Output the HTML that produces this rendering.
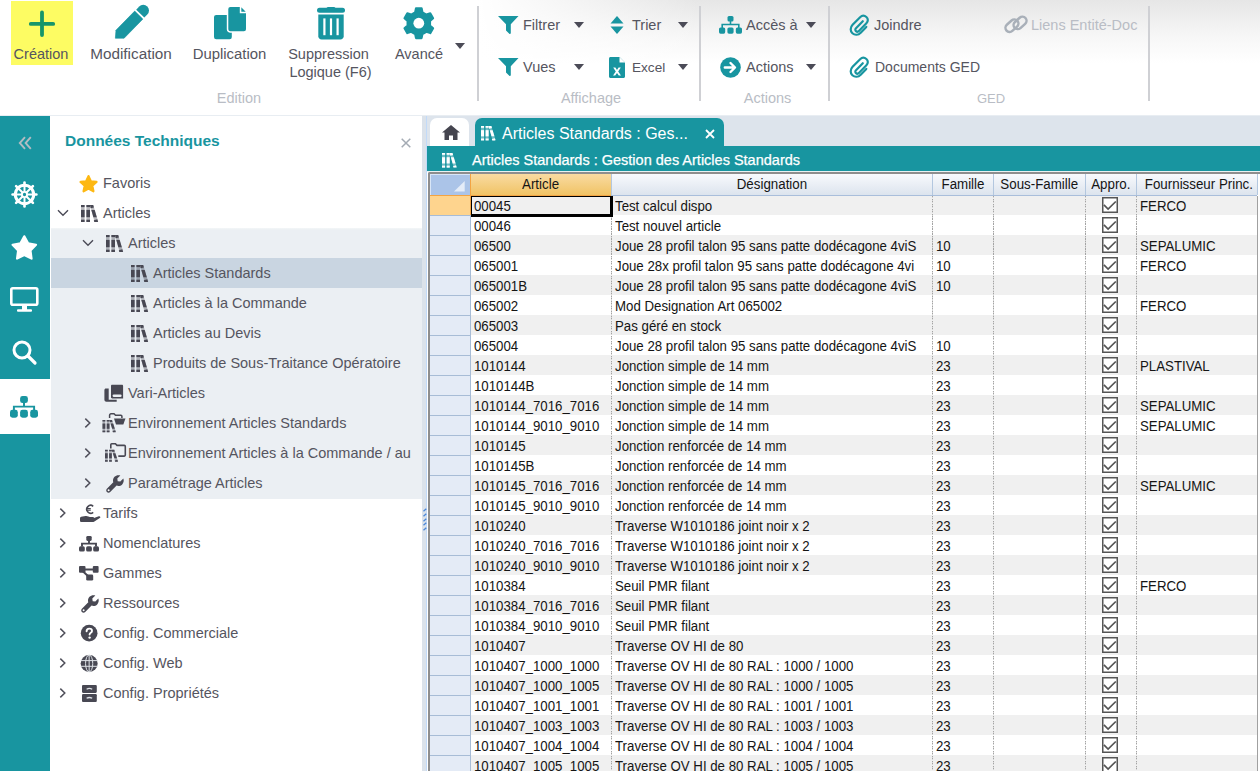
<!DOCTYPE html>
<html><head><meta charset="utf-8"><style>
*{margin:0;padding:0;box-sizing:border-box}
html,body{width:1260px;height:771px;overflow:hidden;background:#fff;font-family:"Liberation Sans",sans-serif;color:#4b4b57}
.a{position:absolute}
svg{position:absolute;overflow:visible}
.rl{position:absolute;font-size:14.5px;white-space:nowrap;line-height:18px;color:#555560}
.gl{position:absolute;font-size:14.5px;white-space:nowrap;line-height:18px;color:#b9bdc5}
.sep{position:absolute;top:6px;width:2px;height:95px;background:#cfd0d4}
.tri{position:absolute;width:0;height:0;border-left:5.5px solid transparent;border-right:5.5px solid transparent;border-top:6.5px solid #4b4b57}
.tt{position:absolute;font-size:14.5px;line-height:30px;height:30px;white-space:nowrap;color:#555560}
.g{position:absolute;font-size:15.5px;line-height:20px;height:20px;white-space:nowrap;color:#151515}
.s{display:inline-block;transform:scaleX(.855);transform-origin:0 50%}
.hc{position:absolute;top:173px;height:22px;font-size:15.5px;line-height:21px;text-align:center;color:#151515;white-space:nowrap;overflow:hidden}
.hc span{display:inline-block;transform:scaleX(.86)}
</style></head><body>
<div class="a" style="left:0;top:0;width:1260px;height:115px;background:linear-gradient(#e6e6e6 0,#f6f6f6 35px,#fff 63px)"></div>
<div class="a" style="left:0;top:0;width:700px;height:115px;background:linear-gradient(to right,#fff 0,#fff 478px,rgba(255,255,255,0) 700px)"></div>
<div class="a" style="left:0;top:115px;width:1260px;height:1px;background:#e8edf2"></div>
<div class="a" style="left:11px;top:1px;width:62px;height:64px;background:#fdfc63"></div>
<svg style="left:0;top:0" width="80" height="60"><path d="M42 12.5V35M30.8 23.9H53.2" stroke="#16966a" stroke-width="3.8" stroke-linecap="round"/></svg>
<div class="rl" style="left:-59px;top:45px;width:200px;text-align:center">Création</div>
<div class="rl" style="left:31px;top:44.5px;width:200px;text-align:center"><span style="font-size:15.3px">Modification</span></div>
<div class="rl" style="left:129.5px;top:45px;width:200px;text-align:center"><span style="font-size:14.9px">Duplication</span></div>
<div class="rl" style="left:228.5px;top:45px;width:200px;text-align:center">Suppression</div>
<div class="rl" style="left:230.5px;top:63px;width:200px;text-align:center">Logique (F6)</div>
<div class="rl" style="left:319px;top:45px;width:200px;text-align:center">Avancé</div>
<div class="gl" style="left:139px;top:89px;width:200px;text-align:center">Edition</div>
<svg style="left:0;top:0" width="160" height="50"><g transform="translate(115.5 38.8) rotate(-45.5)"><path d="M0.3 -0.5L6.5 -5.7H33.2V5.7H6.5Z" fill="#1895a0" stroke="#1895a0" stroke-width=".6" stroke-linejoin="round"/><path d="M35.3 -5.7H39.6A5.7 5.7 0 0 1 39.6 5.7H35.3Z" fill="#1895a0"/></g></svg>
<svg style="left:214px;top:7px" width="33" height="33" viewBox="0 0 33 33"><rect x="0" y="7.9" width="17.8" height="24.4" rx="2.2" fill="#1895a0"/><path d="M16.4 0H26.3L32 5.7V22.2a2.1 2.1 0 0 1-2.1 2.1H16.4a2.1 2.1 0 0 1-2.1-2.1V2.1A2.1 2.1 0 0 1 16.4 0z" fill="#fff" stroke="#fff" stroke-width="3"/><path d="M25.8 0H16.4a2.1 2.1 0 0 0-2.1 2.1V22.2a2.1 2.1 0 0 0 2.1 2.1H29.9a2.1 2.1 0 0 0 2.1-2.1V6.2H25.8z" fill="#1895a0"/><path d="M27.3 0.3L31.7 4.7H27.3z" fill="#1895a0"/></svg>
<svg style="left:317px;top:7px" width="29" height="33" viewBox="0 0 29 33"><rect x="0" y="0.8" width="28" height="5" rx="2.5" fill="#1895a0"/><rect x="9.5" y="0" width="9" height="3" rx="1.5" fill="#1895a0"/><path d="M1.3 7.6h25.4V29.2c0 1.9-1.5 3.3-3.3 3.3H4.6c-1.9 0-3.3-1.5-3.3-3.3z" fill="#1895a0"/><rect x="6.3" y="11.4" width="2.2" height="16.8" fill="#fff"/><rect x="12.9" y="11.4" width="2.2" height="16.8" fill="#fff"/><rect x="19.5" y="11.4" width="2.2" height="16.8" fill="#fff"/></svg>
<svg style="left:403px;top:7px" width="32" height="33" viewBox="0 0 32 33"><path d="M12.13 5.30L12.95 1.27L18.65 1.27L19.47 5.30L23.41 7.57L27.31 6.27L30.15 11.20L27.07 13.93L27.07 18.47L30.15 21.20L27.31 26.13L23.41 24.83L19.47 27.10L18.65 31.13L12.95 31.13L12.13 27.10L8.19 24.83L4.29 26.13L1.45 21.20L4.53 18.47L4.53 13.93L1.45 11.20L4.29 6.27L8.19 7.57Z" fill="#1895a0" stroke="#1895a0" stroke-width="2" stroke-linejoin="round"/><circle cx="15.8" cy="16.2" r="11.5" fill="#1895a0"/><circle cx="15.8" cy="16.2" r="5.4" fill="#fff"/></svg>
<div class="tri" style="left:455px;top:42.5px"></div>
<div class="sep" style="left:477px"></div>
<div class="sep" style="left:699px"></div>
<div class="sep" style="left:828px"></div>
<div class="sep" style="left:1148px"></div>
<svg style="left:497.5px;top:16px" width="21" height="18" viewBox="0 0 21 18"><path d="M0 0h20.5l-7.7 8.3V17c0 .9-.9 1.2-1.5.7L8 14.6V8.3z" fill="#1895a0"/></svg>
<div class="rl" style="left:523px;top:15.5px">Filtrer</div>
<div class="tri" style="left:574px;top:21.5px"></div>
<svg style="left:610px;top:16px" width="14" height="19" viewBox="0 0 14 19"><path d="M7 0L13.5 7.5H.5z" fill="#1895a0"/><path d="M7 18L13.5 10.5H.5z" fill="#1895a0"/></svg>
<div class="rl" style="left:632px;top:15.5px">Trier</div>
<div class="tri" style="left:677.5px;top:21.5px"></div>
<svg style="left:497.5px;top:58px" width="21" height="18" viewBox="0 0 21 18"><path d="M0 0h20.5l-7.7 8.3V17c0 .9-.9 1.2-1.5.7L8 14.6V8.3z" fill="#1895a0"/></svg>
<div class="rl" style="left:523px;top:58px">Vues</div>
<div class="tri" style="left:574px;top:64px"></div>
<svg style="left:609px;top:57px" width="16" height="21" viewBox="0 0 16 21"><path d="M1.5 0H10.5L16 5.5V19.5c0 .8-.7 1.5-1.5 1.5h-13C.7 21 0 20.3 0 19.5V1.5C0 .7.7 0 1.5 0z" fill="#1895a0"/><path d="M10.5 0v5.5H16z" fill="#fff"/><path d="M4.2 10.5h2.2l1.6 2.6 1.6-2.6h2.2l-2.6 3.9 2.8 4.2H9.8L8 15.9l-1.8 2.7H4l2.8-4.2z" fill="#fff"/></svg>
<div class="rl" style="left:632px;top:58px"><span style="font-size:13.6px">Excel</span></div>
<div class="tri" style="left:677.5px;top:64px"></div>
<div class="gl" style="left:491px;top:89px;width:200px;text-align:center">Affichage</div>
<svg style="left:719px;top:16px" width="23" height="18" viewBox="0 0 23 18"><rect x="8.5" y="0" width="6" height="5.5" rx="1.5" fill="#1895a0"/><path d="M11.5 5v4M3.2 12V8.5H19.8V12" stroke="#1895a0" stroke-width="1.6" fill="none"/><rect x="0" y="11.5" width="6.2" height="6.2" rx="1.6" fill="#1895a0"/><rect x="8.4" y="11.5" width="6.2" height="6.2" rx="1.6" fill="#1895a0"/><rect x="16.8" y="11.5" width="6.2" height="6.2" rx="1.6" fill="#1895a0"/></svg>
<div class="rl" style="left:746px;top:15.5px">Accès à</div>
<div class="tri" style="left:806px;top:21.5px"></div>
<svg style="left:720px;top:57px" width="21" height="21" viewBox="0 0 21 21"><circle cx="10.5" cy="10.5" r="10.3" fill="#1895a0"/><path d="M4.8 10.5h9.5M10.5 6l4.5 4.5-4.5 4.5" stroke="#fff" stroke-width="2.4" fill="none" stroke-linecap="round" stroke-linejoin="round"/></svg>
<div class="rl" style="left:746px;top:58px">Actions</div>
<div class="tri" style="left:806px;top:64px"></div>
<div class="gl" style="left:667.5px;top:89px;width:200px;text-align:center">Actions</div>
<svg style="left:850px;top:15px" width="19" height="20" viewBox="0 0 19 20"><path d="M12.8 6.2L6 13.2c-.9.9-.9 2.1 0 2.9s2 .8 2.9-.1l7.5-7.7c1.9-1.9 1.9-4.6 0-6.3s-4.5-1.6-6.3.2L2.6 9.8C.1 12.4.1 16 2.4 18.2s5.9 2 8.3-.5l5.6-5.8" stroke="#1895a0" stroke-width="2.2" fill="none" stroke-linecap="round"/></svg>
<div class="rl" style="left:874px;top:15.5px">Joindre</div>
<svg style="left:850px;top:57px" width="19" height="20" viewBox="0 0 19 20"><path d="M12.8 6.2L6 13.2c-.9.9-.9 2.1 0 2.9s2 .8 2.9-.1l7.5-7.7c1.9-1.9 1.9-4.6 0-6.3s-4.5-1.6-6.3.2L2.6 9.8C.1 12.4.1 16 2.4 18.2s5.9 2 8.3-.5l5.6-5.8" stroke="#1895a0" stroke-width="2.2" fill="none" stroke-linecap="round"/></svg>
<div class="rl" style="left:875px;top:58px"><span style="font-size:14px">Documents GED</span></div>
<svg style="left:1004px;top:15px" width="24" height="19" viewBox="0 0 24 19"><g stroke="#a9b0b9" stroke-width="2.3" fill="none" transform="translate(12 9.3) scale(1.08) translate(-12 -9.3)"><rect x="1.5" y="6.8" width="13.5" height="7.6" rx="3.8" transform="rotate(-42 8.25 10.6)"/><rect x="9" y="4.2" width="13.5" height="7.6" rx="3.8" transform="rotate(-42 15.75 8)"/></g></svg>
<div class="gl" style="left:1031px;top:15.5px">Liens Entité-Doc</div>
<div class="gl" style="left:891px;top:89px;width:200px;text-align:center"><span style="font-size:13px">GED</span></div>
<div class="a" style="left:0;top:116px;width:49.6px;height:263px;background:#1895a0"></div>
<div class="a" style="left:0;top:434px;width:49.6px;height:337px;background:#1895a0"></div>
<svg style="left:18px;top:136px" width="14" height="14" viewBox="0 0 14 14"><path d="M7 1.2L1.8 7 7 12.8M12.8 1.2L7.6 7 12.8 12.8" stroke="#b2bcc2" stroke-width="1.9" fill="none"/></svg>
<svg style="left:11.75px;top:181.75px" width="25" height="25" viewBox="0 0 25 25"><circle cx="12.5" cy="12.5" r="9.2" stroke="#fff" stroke-width="3" fill="none"/><line x1="15.30" y1="12.50" x2="21.30" y2="12.50" stroke="#fff" stroke-width="2"/><line x1="14.48" y1="14.48" x2="18.72" y2="18.72" stroke="#fff" stroke-width="2"/><line x1="12.50" y1="15.30" x2="12.50" y2="21.30" stroke="#fff" stroke-width="2"/><line x1="10.52" y1="14.48" x2="6.28" y2="18.72" stroke="#fff" stroke-width="2"/><line x1="9.70" y1="12.50" x2="3.70" y2="12.50" stroke="#fff" stroke-width="2"/><line x1="10.52" y1="10.52" x2="6.28" y2="6.28" stroke="#fff" stroke-width="2"/><line x1="12.50" y1="9.70" x2="12.50" y2="3.70" stroke="#fff" stroke-width="2"/><line x1="14.48" y1="10.52" x2="18.72" y2="6.28" stroke="#fff" stroke-width="2"/><line x1="21.50" y1="12.50" x2="24.40" y2="12.50" stroke="#fff" stroke-width="2.6" stroke-linecap="round"/><line x1="18.86" y1="18.86" x2="20.91" y2="20.91" stroke="#fff" stroke-width="2.6" stroke-linecap="round"/><line x1="12.50" y1="21.50" x2="12.50" y2="24.40" stroke="#fff" stroke-width="2.6" stroke-linecap="round"/><line x1="6.14" y1="18.86" x2="4.09" y2="20.91" stroke="#fff" stroke-width="2.6" stroke-linecap="round"/><line x1="3.50" y1="12.50" x2="0.60" y2="12.50" stroke="#fff" stroke-width="2.6" stroke-linecap="round"/><line x1="6.14" y1="6.14" x2="4.09" y2="4.09" stroke="#fff" stroke-width="2.6" stroke-linecap="round"/><line x1="12.50" y1="3.50" x2="12.50" y2="0.60" stroke="#fff" stroke-width="2.6" stroke-linecap="round"/><line x1="18.86" y1="6.14" x2="20.91" y2="4.09" stroke="#fff" stroke-width="2.6" stroke-linecap="round"/><circle cx="12.5" cy="12.5" r="2.6" stroke="#fff" stroke-width="1.9" fill="#1895a0"/></svg>
<svg style="left:0;top:0" width="60" height="300"><path d="M24.30 236.30L28.12 243.34L36.00 244.80L30.48 250.61L31.53 258.55L24.30 255.10L17.07 258.55L18.12 250.61L12.60 244.80L20.48 243.34Z" fill="#fff" stroke="#fff" stroke-width="2.2" stroke-linejoin="round"/></svg>
<svg style="left:10px;top:287px" width="29" height="26" viewBox="0 0 29 26"><rect x="1.3" y="1.3" width="26" height="16.5" rx="1.5" stroke="#fff" stroke-width="2.6" fill="none"/><rect x="12" y="18" width="5" height="5" fill="#fff"/><rect x="7" y="22.2" width="15" height="2.6" rx="1" fill="#fff"/></svg>
<svg style="left:12px;top:340px" width="26" height="26" viewBox="0 0 26 26"><circle cx="10" cy="10" r="8" stroke="#fff" stroke-width="3" fill="none"/><path d="M16 16l7 7" stroke="#fff" stroke-width="3.2" stroke-linecap="round"/></svg>
<svg style="left:10px;top:396px" width="28" height="22" viewBox="0 0 23 18" preserveAspectRatio="none"><rect x="8.3" y="0" width="6.4" height="5.8" rx="2" fill="#1895a0"/><path d="M11.5 5v3.5M3.2 12.5V8.7H19.8V12.5" stroke="#1895a0" stroke-width="1.6" fill="none"/><rect x="0" y="11.3" width="6.4" height="6.4" rx="2" fill="#1895a0"/><rect x="8.3" y="11.3" width="6.4" height="6.4" rx="2" fill="#1895a0"/><rect x="16.6" y="11.3" width="6.4" height="6.4" rx="2" fill="#1895a0"/></svg>
<div class="a" style="left:51px;top:228px;width:371px;height:271px;background:linear-gradient(#f3f6f8,#ebeff3 2px)"></div>
<div class="a" style="left:51px;top:258px;width:371px;height:30px;background:#c9d5e1"></div>
<div class="a" style="left:65px;top:131px;font-size:15.5px;font-weight:bold;color:#1895a0;white-space:nowrap;line-height:20px">Données Techniques</div>
<svg style="left:401px;top:138px" width="10" height="10" viewBox="0 0 10 10"><path d="M.7 .7l8.6 8.6M9.3 .7L.7 9.3" stroke="#a4abb4" stroke-width="1.5"/></svg>
<svg style="left:0;top:0" width="120" height="200"><path d="M88.50 176.10L90.85 181.26L96.49 181.90L92.30 185.74L93.44 191.30L88.50 188.50L83.56 191.30L84.70 185.74L80.51 181.90L86.15 181.26Z" fill="#fdb813" stroke="#fdb813" stroke-width="2.2" stroke-linejoin="round"/></svg>
<div class="tt" style="left:103px;top:168px">Favoris</div>
<svg style="left:57px;top:209px" width="12" height="8" viewBox="0 0 12 8"><path d="M1 1.2l5 5 5-5" stroke="#4b4b57" stroke-width="1.4" fill="none"/></svg>
<svg style="left:80.5px;top:205px" width="17.0" height="17.0" viewBox="0 0 17 17"><g fill="#484853"><rect x="0" y="0" width="3.6" height="17" opacity=".38"/><rect x="0" y="0" width="3.6" height="2.1"/><rect x="0" y="4.9" width="3.6" height="7.3"/><rect x="0" y="14.7" width="3.6" height="2.3"/><rect x="5.4" y="0" width="3.6" height="17" opacity=".38"/><rect x="5.4" y="0" width="3.6" height="2.1"/><rect x="5.4" y="4.9" width="3.6" height="7.3"/><rect x="5.4" y="14.7" width="3.6" height="2.3"/><path d="M9 0.1h3.2l5 16.5-3.6.4L9.8 3z" opacity=".38"/><path d="M9 0.1h3.2l.7 2.3L9.6 3.2z"/><path d="M10.3 4.9h3.4l2.1 7.3h-3.4z"/><path d="M12.8 15.3l3.5-1 .7 2.2c.1.5-.1.5-.5.5h-3.2z"/></g></svg>
<div class="tt" style="left:103px;top:198px">Articles</div>
<svg style="left:82px;top:239px" width="12" height="8" viewBox="0 0 12 8"><path d="M1 1.2l5 5 5-5" stroke="#4b4b57" stroke-width="1.4" fill="none"/></svg>
<svg style="left:105.5px;top:235px" width="17.0" height="17.0" viewBox="0 0 17 17"><g fill="#484853"><rect x="0" y="0" width="3.6" height="17" opacity=".38"/><rect x="0" y="0" width="3.6" height="2.1"/><rect x="0" y="4.9" width="3.6" height="7.3"/><rect x="0" y="14.7" width="3.6" height="2.3"/><rect x="5.4" y="0" width="3.6" height="17" opacity=".38"/><rect x="5.4" y="0" width="3.6" height="2.1"/><rect x="5.4" y="4.9" width="3.6" height="7.3"/><rect x="5.4" y="14.7" width="3.6" height="2.3"/><path d="M9 0.1h3.2l5 16.5-3.6.4L9.8 3z" opacity=".38"/><path d="M9 0.1h3.2l.7 2.3L9.6 3.2z"/><path d="M10.3 4.9h3.4l2.1 7.3h-3.4z"/><path d="M12.8 15.3l3.5-1 .7 2.2c.1.5-.1.5-.5.5h-3.2z"/></g></svg>
<div class="tt" style="left:128px;top:228px">Articles</div>
<svg style="left:130.7px;top:265px" width="17.0" height="17.0" viewBox="0 0 17 17"><g fill="#484853"><rect x="0" y="0" width="3.6" height="17" opacity=".38"/><rect x="0" y="0" width="3.6" height="2.1"/><rect x="0" y="4.9" width="3.6" height="7.3"/><rect x="0" y="14.7" width="3.6" height="2.3"/><rect x="5.4" y="0" width="3.6" height="17" opacity=".38"/><rect x="5.4" y="0" width="3.6" height="2.1"/><rect x="5.4" y="4.9" width="3.6" height="7.3"/><rect x="5.4" y="14.7" width="3.6" height="2.3"/><path d="M9 0.1h3.2l5 16.5-3.6.4L9.8 3z" opacity=".38"/><path d="M9 0.1h3.2l.7 2.3L9.6 3.2z"/><path d="M10.3 4.9h3.4l2.1 7.3h-3.4z"/><path d="M12.8 15.3l3.5-1 .7 2.2c.1.5-.1.5-.5.5h-3.2z"/></g></svg>
<div class="tt" style="left:153px;top:258px">Articles Standards</div>
<svg style="left:130.7px;top:295px" width="17.0" height="17.0" viewBox="0 0 17 17"><g fill="#484853"><rect x="0" y="0" width="3.6" height="17" opacity=".38"/><rect x="0" y="0" width="3.6" height="2.1"/><rect x="0" y="4.9" width="3.6" height="7.3"/><rect x="0" y="14.7" width="3.6" height="2.3"/><rect x="5.4" y="0" width="3.6" height="17" opacity=".38"/><rect x="5.4" y="0" width="3.6" height="2.1"/><rect x="5.4" y="4.9" width="3.6" height="7.3"/><rect x="5.4" y="14.7" width="3.6" height="2.3"/><path d="M9 0.1h3.2l5 16.5-3.6.4L9.8 3z" opacity=".38"/><path d="M9 0.1h3.2l.7 2.3L9.6 3.2z"/><path d="M10.3 4.9h3.4l2.1 7.3h-3.4z"/><path d="M12.8 15.3l3.5-1 .7 2.2c.1.5-.1.5-.5.5h-3.2z"/></g></svg>
<div class="tt" style="left:153px;top:288px">Articles à la Commande</div>
<svg style="left:130.7px;top:325px" width="17.0" height="17.0" viewBox="0 0 17 17"><g fill="#484853"><rect x="0" y="0" width="3.6" height="17" opacity=".38"/><rect x="0" y="0" width="3.6" height="2.1"/><rect x="0" y="4.9" width="3.6" height="7.3"/><rect x="0" y="14.7" width="3.6" height="2.3"/><rect x="5.4" y="0" width="3.6" height="17" opacity=".38"/><rect x="5.4" y="0" width="3.6" height="2.1"/><rect x="5.4" y="4.9" width="3.6" height="7.3"/><rect x="5.4" y="14.7" width="3.6" height="2.3"/><path d="M9 0.1h3.2l5 16.5-3.6.4L9.8 3z" opacity=".38"/><path d="M9 0.1h3.2l.7 2.3L9.6 3.2z"/><path d="M10.3 4.9h3.4l2.1 7.3h-3.4z"/><path d="M12.8 15.3l3.5-1 .7 2.2c.1.5-.1.5-.5.5h-3.2z"/></g></svg>
<div class="tt" style="left:153px;top:318px">Articles au Devis</div>
<svg style="left:130.7px;top:355px" width="17.0" height="17.0" viewBox="0 0 17 17"><g fill="#484853"><rect x="0" y="0" width="3.6" height="17" opacity=".38"/><rect x="0" y="0" width="3.6" height="2.1"/><rect x="0" y="4.9" width="3.6" height="7.3"/><rect x="0" y="14.7" width="3.6" height="2.3"/><rect x="5.4" y="0" width="3.6" height="17" opacity=".38"/><rect x="5.4" y="0" width="3.6" height="2.1"/><rect x="5.4" y="4.9" width="3.6" height="7.3"/><rect x="5.4" y="14.7" width="3.6" height="2.3"/><path d="M9 0.1h3.2l5 16.5-3.6.4L9.8 3z" opacity=".38"/><path d="M9 0.1h3.2l.7 2.3L9.6 3.2z"/><path d="M10.3 4.9h3.4l2.1 7.3h-3.4z"/><path d="M12.8 15.3l3.5-1 .7 2.2c.1.5-.1.5-.5.5h-3.2z"/></g></svg>
<div class="tt" style="left:153px;top:348px">Produits de Sous-Traitance Opératoire</div>
<svg style="left:103px;top:384px" width="21" height="18" viewBox="0 0 21 18"><g fill="#484853"><path d="M9.2 0.8H18.9C19.6 0.8 20.1 1.3 20.1 2V14.4H9.2C8.5 14.4 8 13.9 8 13.2V2C8 1.3 8.5 0.8 9.2 0.8z"/><path d="M2.9 4.5H5.7V15.8H13.7V17.7H3.4C2.3 17.7 1.4 16.8 1.4 15.7V6C1.4 5.2 2.1 4.5 2.9 4.5z"/></g><rect x="9.6" y="10.4" width="9" height="2.5" rx="1.25" fill="#ebeff3"/></svg>
<div class="tt" style="left:128px;top:378px">Vari-Articles</div>
<svg style="left:84px;top:417px" width="8" height="12" viewBox="0 0 8 12"><path d="M1.3 1.6L5.8 6 1.3 10.4" stroke="#50505b" stroke-width="1.5" fill="none"/></svg>
<svg style="left:102px;top:413px" width="24" height="20" viewBox="0 0 24 20"><g fill="#484853" transform="translate(0.5 7) scale(.78 .72)"><rect x="0" y="0" width="3.6" height="17" opacity=".38"/><rect x="0" y="0" width="3.6" height="2.1"/><rect x="0" y="4.9" width="3.6" height="7.3"/><rect x="0" y="14.7" width="3.6" height="2.3"/><rect x="5.4" y="0" width="3.6" height="17" opacity=".38"/><rect x="5.4" y="0" width="3.6" height="2.1"/><rect x="5.4" y="4.9" width="3.6" height="7.3"/><rect x="5.4" y="14.7" width="3.6" height="2.3"/><path d="M9 0.1h3.2l5 16.5-3.6.4L9.8 3z" opacity=".38"/><path d="M9 0.1h3.2l.7 2.3L9.6 3.2z"/><path d="M10.3 4.9h3.4l2.1 7.3h-3.4z"/><path d="M12.8 15.3l3.5-1 .7 2.2c.1.5-.1.5-.5.5h-3.2z"/></g><path d="M7.6 5V2.2c0-.8.6-1.4 1.4-1.4h3l1.5 1.5h5.4c.6 0 1 .4 1 1V5" stroke="#484853" stroke-width="1.5" fill="none"/><path d="M12 5.6H23.5L21.3 11.4H14z" fill="#484853"/></svg>
<div class="tt" style="left:128px;top:408px">Environnement Articles Standards</div>
<svg style="left:84px;top:447px" width="8" height="12" viewBox="0 0 8 12"><path d="M1.3 1.6L5.8 6 1.3 10.4" stroke="#50505b" stroke-width="1.5" fill="none"/></svg>
<svg style="left:104px;top:443px" width="22" height="19" viewBox="0 0 22 19"><g fill="#484853" transform="translate(1 6.8) scale(.76 .7)"><rect x="0" y="0" width="3.6" height="17" opacity=".38"/><rect x="0" y="0" width="3.6" height="2.1"/><rect x="0" y="4.9" width="3.6" height="7.3"/><rect x="0" y="14.7" width="3.6" height="2.3"/><rect x="5.4" y="0" width="3.6" height="17" opacity=".38"/><rect x="5.4" y="0" width="3.6" height="2.1"/><rect x="5.4" y="4.9" width="3.6" height="7.3"/><rect x="5.4" y="14.7" width="3.6" height="2.3"/><path d="M9 0.1h3.2l5 16.5-3.6.4L9.8 3z" opacity=".38"/><path d="M9 0.1h3.2l.7 2.3L9.6 3.2z"/><path d="M10.3 4.9h3.4l2.1 7.3h-3.4z"/><path d="M12.8 15.3l3.5-1 .7 2.2c.1.5-.1.5-.5.5h-3.2z"/></g><path d="M6.8 5.5V1.8c0-.6.5-1 1-1h3.6l1.6 1.6h7.3c.6 0 1 .4 1 1v8.7c0 .6-.4 1-1 1H14.3" stroke="#484853" stroke-width="1.6" fill="none"/></svg>
<div class="tt" style="left:128px;top:438px">Environnement Articles à la Commande / au</div>
<svg style="left:84px;top:477px" width="8" height="12" viewBox="0 0 8 12"><path d="M1.3 1.6L5.8 6 1.3 10.4" stroke="#50505b" stroke-width="1.5" fill="none"/></svg>
<svg style="left:105.5px;top:475px" width="18" height="18" viewBox="0 0 18 18"><path d="M17.3 3.6l-3 3-2.6-.4-.4-2.6 3-3C12.6-.3 10 .2 8.5 1.7 7 3.2 6.6 5.4 7.3 7.3L.9 13.7c-.9.9-.9 2.4 0 3.3s2.4.9 3.3 0l6.4-6.4c1.9.7 4.1.3 5.6-1.2 1.5-1.5 2-4.1 1.1-5.8z" fill="#484853"/><circle cx="2.6" cy="15.3" r="1" fill="#fff"/></svg>
<div class="tt" style="left:128px;top:468px">Paramétrage Articles</div>
<svg style="left:59px;top:507px" width="8" height="12" viewBox="0 0 8 12"><path d="M1.3 1.6L5.8 6 1.3 10.4" stroke="#50505b" stroke-width="1.5" fill="none"/></svg>
<div class="tt" style="left:103px;top:498px">Tarifs</div>
<svg style="left:59px;top:537px" width="8" height="12" viewBox="0 0 8 12"><path d="M1.3 1.6L5.8 6 1.3 10.4" stroke="#50505b" stroke-width="1.5" fill="none"/></svg>
<div class="tt" style="left:103px;top:528px">Nomenclatures</div>
<svg style="left:59px;top:567px" width="8" height="12" viewBox="0 0 8 12"><path d="M1.3 1.6L5.8 6 1.3 10.4" stroke="#50505b" stroke-width="1.5" fill="none"/></svg>
<div class="tt" style="left:103px;top:558px">Gammes</div>
<svg style="left:59px;top:597px" width="8" height="12" viewBox="0 0 8 12"><path d="M1.3 1.6L5.8 6 1.3 10.4" stroke="#50505b" stroke-width="1.5" fill="none"/></svg>
<div class="tt" style="left:103px;top:588px">Ressources</div>
<svg style="left:59px;top:627px" width="8" height="12" viewBox="0 0 8 12"><path d="M1.3 1.6L5.8 6 1.3 10.4" stroke="#50505b" stroke-width="1.5" fill="none"/></svg>
<div class="tt" style="left:103px;top:618px">Config. Commerciale</div>
<svg style="left:59px;top:657px" width="8" height="12" viewBox="0 0 8 12"><path d="M1.3 1.6L5.8 6 1.3 10.4" stroke="#50505b" stroke-width="1.5" fill="none"/></svg>
<div class="tt" style="left:103px;top:648px">Config. Web</div>
<svg style="left:59px;top:687px" width="8" height="12" viewBox="0 0 8 12"><path d="M1.3 1.6L5.8 6 1.3 10.4" stroke="#50505b" stroke-width="1.5" fill="none"/></svg>
<div class="tt" style="left:103px;top:678px">Config. Propriétés</div>
<svg style="left:79.5px;top:504.5px" width="21" height="18" viewBox="0 0 21 18"><path d="M0 13.2Q0 12 1.2 11.8L5.5 11Q7 10.8 8.3 11.4L9.8 12.1H13Q14 12.1 14 13L18.8 11.3Q20 11 20.3 11.9Q20.5 12.6 19.8 13.1L14 16.7Q13.4 17.1 12.6 17.1H1.2Q0 17.1 0 16Z" fill="#484853"/><path d="M13.2 1.3A3.9 3.9 0 1 0 13.2 7.3" stroke="#484853" stroke-width="1.6" fill="none"/><path d="M6.3 3.6H10.8M6.3 5.2H10.8" stroke="#484853" stroke-width="1.1"/></svg>
<svg style="left:79px;top:535.5px" width="20" height="16" viewBox="0 0 20 16"><rect x="7.3" y="0" width="5.4" height="4.9" rx="1.3" fill="#484853"/><path d="M10 4.5V7.6M3 10.5V7.6H17V10.5" stroke="#484853" stroke-width="1.9" fill="none"/><rect x="0" y="10.3" width="5.8" height="5.2" rx="1.6" fill="#484853"/><rect x="7.1" y="10.3" width="5.8" height="5.2" rx="1.6" fill="#484853"/><rect x="14.2" y="10.3" width="5.8" height="5.2" rx="1.6" fill="#484853"/></svg>
<svg style="left:79px;top:566px" width="20" height="15" viewBox="0 0 20 15"><g fill="#484853"><rect x="0" y="0" width="6.5" height="6.8" rx="1"/><rect x="13.8" y="0" width="5.8" height="6.8" rx="1"/><rect x="7.2" y="8.6" width="7" height="6" rx="1.3"/></g><path d="M5 3.4h9.5M3.5 5l6 5.5" stroke="#484853" stroke-width="2"/></svg>
<svg style="left:80.5px;top:595px" width="18" height="18" viewBox="0 0 18 18"><path d="M17.3 3.6l-3 3-2.6-.4-.4-2.6 3-3C12.6-.3 10 .2 8.5 1.7 7 3.2 6.6 5.4 7.3 7.3L.9 13.7c-.9.9-.9 2.4 0 3.3s2.4.9 3.3 0l6.4-6.4c1.9.7 4.1.3 5.6-1.2 1.5-1.5 2-4.1 1.1-5.8z" fill="#484853"/><circle cx="2.6" cy="15.3" r="1" fill="#fff"/></svg>
<svg style="left:80px;top:624px" width="19" height="19" viewBox="0 0 19 19"><circle cx="9.15" cy="9.2" r="8.35" fill="#484853"/><path d="M6.6 7.2c0-1.6 1.2-2.6 2.7-2.6 1.6 0 2.7 1 2.7 2.3 0 1.9-2.4 1.9-2.4 3.6" stroke="#fff" stroke-width="1.9" fill="none" stroke-linecap="round"/><circle cx="9.6" cy="13.6" r="1.2" fill="#fff"/></svg>
<svg style="left:80px;top:654px" width="19" height="19" viewBox="0 0 19 19"><circle cx="9.15" cy="9.45" r="8.5" fill="#484853"/><g stroke="#dfe3e8" stroke-width="1" fill="none"><ellipse cx="9.15" cy="9.45" rx="3.6" ry="8.5"/><path d="M9.15 .9v17.1M.6 6.6h17.1M.6 12.3h17.1"/></g></svg>
<svg style="left:82px;top:685px" width="15" height="17" viewBox="0 0 15 17"><rect x="0" y="0" width="14.8" height="7.9" rx="1.1" fill="#484853"/><rect x="0" y="9.1" width="14.8" height="7.9" rx="1.1" fill="#484853"/><path d="M4.6 4.2q2.8-1.6 5.6 0M4.6 13.3q2.8-1.6 5.6 0" stroke="#dfe3e8" stroke-width="1.3" fill="none"/></svg>
<div class="a" style="left:422px;top:116px;width:6px;height:655px;background:#dbe2ea"></div>
<div class="a" style="left:426px;top:116px;width:1px;height:655px;background:#c2daf8"></div>
<svg style="left:423px;top:508.0px" width="4" height="4" viewBox="0 0 4 4"><path d="M.5 3.3L3.3.7" stroke="#4a86d8" stroke-width="1.3"/></svg>
<svg style="left:423px;top:512.8px" width="4" height="4" viewBox="0 0 4 4"><path d="M.5 3.3L3.3.7" stroke="#4a86d8" stroke-width="1.3"/></svg>
<svg style="left:423px;top:517.6px" width="4" height="4" viewBox="0 0 4 4"><path d="M.5 3.3L3.3.7" stroke="#4a86d8" stroke-width="1.3"/></svg>
<svg style="left:423px;top:522.4px" width="4" height="4" viewBox="0 0 4 4"><path d="M.5 3.3L3.3.7" stroke="#4a86d8" stroke-width="1.3"/></svg>
<svg style="left:423px;top:527.2px" width="4" height="4" viewBox="0 0 4 4"><path d="M.5 3.3L3.3.7" stroke="#4a86d8" stroke-width="1.3"/></svg>
<div class="a" style="left:427px;top:116px;width:833px;height:30px;background:#dde4ec"></div>
<div class="a" style="left:430px;top:118px;width:39px;height:30px;background:#fff;border-radius:7px 7px 0 0"></div>
<svg style="left:442px;top:125px" width="18" height="15" viewBox="0 0 18 15"><path d="M9 0L18 7.5h-2.5V15h-4.5v-4.5H7V15H2.5V7.5H0z" fill="#45454f"/></svg>
<div class="a" style="left:475px;top:118px;width:249px;height:30px;background:#1895a0;border-radius:7px 7px 0 0"></div>
<svg style="left:481px;top:126px" width="14.45" height="14.45" viewBox="0 0 17 17"><g fill="#fff"><rect x="0" y="0" width="3.6" height="17" opacity=".38"/><rect x="0" y="0" width="3.6" height="2.1"/><rect x="0" y="4.9" width="3.6" height="7.3"/><rect x="0" y="14.7" width="3.6" height="2.3"/><rect x="5.4" y="0" width="3.6" height="17" opacity=".38"/><rect x="5.4" y="0" width="3.6" height="2.1"/><rect x="5.4" y="4.9" width="3.6" height="7.3"/><rect x="5.4" y="14.7" width="3.6" height="2.3"/><path d="M9 0.1h3.2l5 16.5-3.6.4L9.8 3z" opacity=".38"/><path d="M9 0.1h3.2l.7 2.3L9.6 3.2z"/><path d="M10.3 4.9h3.4l2.1 7.3h-3.4z"/><path d="M12.8 15.3l3.5-1 .7 2.2c.1.5-.1.5-.5.5h-3.2z"/></g></svg>
<div class="a" style="left:502px;top:125px;font-size:16px;line-height:18px;color:#fff;white-space:nowrap">Articles Standards : Ges...</div>
<svg style="left:704.5px;top:128.5px" width="10" height="10" viewBox="0 0 10 10"><path d="M1 1l8 8M9 1L1 9" stroke="#fff" stroke-width="1.8"/></svg>
<div class="a" style="left:427px;top:146px;width:833px;height:25px;background:#1895a0"></div>
<svg style="left:441.5px;top:152.5px" width="14.62" height="14.62" viewBox="0 0 17 17"><g fill="#fff"><rect x="0" y="0" width="3.6" height="17" opacity=".38"/><rect x="0" y="0" width="3.6" height="2.1"/><rect x="0" y="4.9" width="3.6" height="7.3"/><rect x="0" y="14.7" width="3.6" height="2.3"/><rect x="5.4" y="0" width="3.6" height="17" opacity=".38"/><rect x="5.4" y="0" width="3.6" height="2.1"/><rect x="5.4" y="4.9" width="3.6" height="7.3"/><rect x="5.4" y="14.7" width="3.6" height="2.3"/><path d="M9 0.1h3.2l5 16.5-3.6.4L9.8 3z" opacity=".38"/><path d="M9 0.1h3.2l.7 2.3L9.6 3.2z"/><path d="M10.3 4.9h3.4l2.1 7.3h-3.4z"/><path d="M12.8 15.3l3.5-1 .7 2.2c.1.5-.1.5-.5.5h-3.2z"/></g></svg>
<div class="a" style="left:472px;top:151px;font-size:14.5px;line-height:18px;color:#fff;white-space:nowrap;-webkit-text-stroke:0.25px #fff">Articles Standards : Gestion des Articles Standards</div>
<div class="a" style="left:427px;top:171px;width:833px;height:600px;background:#fff;border-top:1px solid #eaf2f2"></div>
<div class="a" style="left:428px;top:172px;width:832px;height:599px;border-left:2px solid #8e8e8e;border-top:2px solid #8e8e8e;border-top-left-radius:2px"></div>
<div class="a" style="left:430px;top:174px;width:40px;height:22px;background:#abc4e8;border-top:1px solid #d9e6f7;border-left:1px solid #d9e6f7"></div>
<svg style="left:454px;top:180.5px" width="11" height="11" viewBox="0 0 11 11"><path d="M10.7 0V10.5H0z" fill="#e4ecf8"/></svg>
<div class="a" style="left:470px;top:174px;width:141px;height:22px;background:linear-gradient(#f9dba2,#f0c262);border-left:1px solid #f3a443"></div>
<div class="a" style="left:611px;top:174px;width:321px;height:22px;background:linear-gradient(#f8fafd,#e8edf4 55%,#dbe3ed);border-left:1px solid #b3c7df"></div>
<div class="a" style="left:932px;top:174px;width:61px;height:22px;background:linear-gradient(#f8fafd,#e8edf4 55%,#dbe3ed);border-left:1px solid #b3c7df"></div>
<div class="a" style="left:993px;top:174px;width:92px;height:22px;background:linear-gradient(#f8fafd,#e8edf4 55%,#dbe3ed);border-left:1px solid #b3c7df"></div>
<div class="a" style="left:1085px;top:174px;width:51px;height:22px;background:linear-gradient(#f8fafd,#e8edf4 55%,#dbe3ed);border-left:1px solid #b3c7df"></div>
<div class="a" style="left:1136px;top:174px;width:121px;height:22px;background:linear-gradient(#f8fafd,#e8edf4 55%,#dbe3ed);border-left:1px solid #b3c7df"></div>
<div class="a" style="left:1257px;top:174px;width:1px;height:21px;background:#b3c7df"></div>
<div class="a" style="left:1258px;top:174px;width:2px;height:600px;background:#fdfdfd"></div>
<div class="hc" style="left:470px;width:141px"><span>Article</span></div>
<div class="hc" style="left:611px;width:321px"><span>Désignation</span></div>
<div class="hc" style="left:932px;width:61px"><span>Famille</span></div>
<div class="hc" style="left:993px;width:92px"><span>Sous-Famille</span></div>
<div class="hc" style="left:1085px;width:51px"><span>Appro.</span></div>
<div class="hc" style="left:1136px;width:121px"><span>Fournisseur Princ.</span></div>
<div class="a" style="left:471px;top:195px;width:786px;height:20px;background:#f0f0f0"></div>
<div class="a" style="left:430px;top:195px;width:40px;height:20px;background:#fed48e"></div>
<div class="a" style="left:471px;top:215px;width:786px;height:20px;background:#fff"></div>
<div class="a" style="left:430px;top:215px;width:40px;height:20px;background:#e4ebf6;border-top:1px solid #a7bcd6"></div>
<div class="a" style="left:471px;top:235px;width:786px;height:20px;background:#f0f0f0"></div>
<div class="a" style="left:430px;top:235px;width:40px;height:20px;background:#e4ebf6;border-top:1px solid #a7bcd6"></div>
<div class="a" style="left:471px;top:255px;width:786px;height:20px;background:#fff"></div>
<div class="a" style="left:430px;top:255px;width:40px;height:20px;background:#e4ebf6;border-top:1px solid #a7bcd6"></div>
<div class="a" style="left:471px;top:275px;width:786px;height:20px;background:#f0f0f0"></div>
<div class="a" style="left:430px;top:275px;width:40px;height:20px;background:#e4ebf6;border-top:1px solid #a7bcd6"></div>
<div class="a" style="left:471px;top:295px;width:786px;height:20px;background:#fff"></div>
<div class="a" style="left:430px;top:295px;width:40px;height:20px;background:#e4ebf6;border-top:1px solid #a7bcd6"></div>
<div class="a" style="left:471px;top:315px;width:786px;height:20px;background:#f0f0f0"></div>
<div class="a" style="left:430px;top:315px;width:40px;height:20px;background:#e4ebf6;border-top:1px solid #a7bcd6"></div>
<div class="a" style="left:471px;top:335px;width:786px;height:20px;background:#fff"></div>
<div class="a" style="left:430px;top:335px;width:40px;height:20px;background:#e4ebf6;border-top:1px solid #a7bcd6"></div>
<div class="a" style="left:471px;top:355px;width:786px;height:20px;background:#f0f0f0"></div>
<div class="a" style="left:430px;top:355px;width:40px;height:20px;background:#e4ebf6;border-top:1px solid #a7bcd6"></div>
<div class="a" style="left:471px;top:375px;width:786px;height:20px;background:#fff"></div>
<div class="a" style="left:430px;top:375px;width:40px;height:20px;background:#e4ebf6;border-top:1px solid #a7bcd6"></div>
<div class="a" style="left:471px;top:395px;width:786px;height:20px;background:#f0f0f0"></div>
<div class="a" style="left:430px;top:395px;width:40px;height:20px;background:#e4ebf6;border-top:1px solid #a7bcd6"></div>
<div class="a" style="left:471px;top:415px;width:786px;height:20px;background:#fff"></div>
<div class="a" style="left:430px;top:415px;width:40px;height:20px;background:#e4ebf6;border-top:1px solid #a7bcd6"></div>
<div class="a" style="left:471px;top:435px;width:786px;height:20px;background:#f0f0f0"></div>
<div class="a" style="left:430px;top:435px;width:40px;height:20px;background:#e4ebf6;border-top:1px solid #a7bcd6"></div>
<div class="a" style="left:471px;top:455px;width:786px;height:20px;background:#fff"></div>
<div class="a" style="left:430px;top:455px;width:40px;height:20px;background:#e4ebf6;border-top:1px solid #a7bcd6"></div>
<div class="a" style="left:471px;top:475px;width:786px;height:20px;background:#f0f0f0"></div>
<div class="a" style="left:430px;top:475px;width:40px;height:20px;background:#e4ebf6;border-top:1px solid #a7bcd6"></div>
<div class="a" style="left:471px;top:495px;width:786px;height:20px;background:#fff"></div>
<div class="a" style="left:430px;top:495px;width:40px;height:20px;background:#e4ebf6;border-top:1px solid #a7bcd6"></div>
<div class="a" style="left:471px;top:515px;width:786px;height:20px;background:#f0f0f0"></div>
<div class="a" style="left:430px;top:515px;width:40px;height:20px;background:#e4ebf6;border-top:1px solid #a7bcd6"></div>
<div class="a" style="left:471px;top:535px;width:786px;height:20px;background:#fff"></div>
<div class="a" style="left:430px;top:535px;width:40px;height:20px;background:#e4ebf6;border-top:1px solid #a7bcd6"></div>
<div class="a" style="left:471px;top:555px;width:786px;height:20px;background:#f0f0f0"></div>
<div class="a" style="left:430px;top:555px;width:40px;height:20px;background:#e4ebf6;border-top:1px solid #a7bcd6"></div>
<div class="a" style="left:471px;top:575px;width:786px;height:20px;background:#fff"></div>
<div class="a" style="left:430px;top:575px;width:40px;height:20px;background:#e4ebf6;border-top:1px solid #a7bcd6"></div>
<div class="a" style="left:471px;top:595px;width:786px;height:20px;background:#f0f0f0"></div>
<div class="a" style="left:430px;top:595px;width:40px;height:20px;background:#e4ebf6;border-top:1px solid #a7bcd6"></div>
<div class="a" style="left:471px;top:615px;width:786px;height:20px;background:#fff"></div>
<div class="a" style="left:430px;top:615px;width:40px;height:20px;background:#e4ebf6;border-top:1px solid #a7bcd6"></div>
<div class="a" style="left:471px;top:635px;width:786px;height:20px;background:#f0f0f0"></div>
<div class="a" style="left:430px;top:635px;width:40px;height:20px;background:#e4ebf6;border-top:1px solid #a7bcd6"></div>
<div class="a" style="left:471px;top:655px;width:786px;height:20px;background:#fff"></div>
<div class="a" style="left:430px;top:655px;width:40px;height:20px;background:#e4ebf6;border-top:1px solid #a7bcd6"></div>
<div class="a" style="left:471px;top:675px;width:786px;height:20px;background:#f0f0f0"></div>
<div class="a" style="left:430px;top:675px;width:40px;height:20px;background:#e4ebf6;border-top:1px solid #a7bcd6"></div>
<div class="a" style="left:471px;top:695px;width:786px;height:20px;background:#fff"></div>
<div class="a" style="left:430px;top:695px;width:40px;height:20px;background:#e4ebf6;border-top:1px solid #a7bcd6"></div>
<div class="a" style="left:471px;top:715px;width:786px;height:20px;background:#f0f0f0"></div>
<div class="a" style="left:430px;top:715px;width:40px;height:20px;background:#e4ebf6;border-top:1px solid #a7bcd6"></div>
<div class="a" style="left:471px;top:735px;width:786px;height:20px;background:#fff"></div>
<div class="a" style="left:430px;top:735px;width:40px;height:20px;background:#e4ebf6;border-top:1px solid #a7bcd6"></div>
<div class="a" style="left:471px;top:755px;width:786px;height:20px;background:#f0f0f0"></div>
<div class="a" style="left:430px;top:755px;width:40px;height:20px;background:#e4ebf6;border-top:1px solid #a7bcd6"></div>
<div class="a" style="left:470px;top:215px;width:1px;height:560px;background:#a7bcd6"></div>
<div class="a" style="left:470px;top:174px;width:1px;height:41px;background:#f3a443"></div>
<div class="a" style="left:430px;top:195px;width:181px;height:1px;background:#f3a443"></div>
<div class="a" style="left:611px;top:195px;width:646px;height:1px;background:#a9bedb"></div>
<div class="a" style="left:1257px;top:196px;width:1px;height:580px;background:#a0a0a0"></div>
<div class="a" style="left:611px;top:196px;width:1px;height:580px;background:repeating-linear-gradient(#a4a4a4 0 1px,#d6d6d6 1px 2px,transparent 2px 2.5px)"></div>
<div class="a" style="left:932px;top:196px;width:1px;height:580px;background:repeating-linear-gradient(#a4a4a4 0 1px,#d6d6d6 1px 2px,transparent 2px 2.5px)"></div>
<div class="a" style="left:993px;top:196px;width:1px;height:580px;background:repeating-linear-gradient(#a4a4a4 0 1px,#d6d6d6 1px 2px,transparent 2px 2.5px)"></div>
<div class="a" style="left:1085px;top:196px;width:1px;height:580px;background:repeating-linear-gradient(#a4a4a4 0 1px,#d6d6d6 1px 2px,transparent 2px 2.5px)"></div>
<div class="a" style="left:1136px;top:196px;width:1px;height:580px;background:repeating-linear-gradient(#a4a4a4 0 1px,#d6d6d6 1px 2px,transparent 2px 2.5px)"></div>
<div class="g" style="left:474px;top:195.5px"><span class="s">00045</span></div>
<div class="g" style="left:615px;top:195.5px"><span class="s">Test calcul dispo</span></div>
<div class="g" style="left:1140px;top:195.5px"><span class="s">FERCO</span></div>
<svg style="left:1102px;top:197px" width="16" height="16" viewBox="0 0 16 16"><rect x=".75" y=".75" width="14.5" height="14.5" fill="#fff" stroke="#555" stroke-width="1.5"/><path d="M1.9 7.9l4.2 4.1 7.7-7.5" stroke="#555" stroke-width="1.7" fill="none"/></svg>
<div class="g" style="left:474px;top:215.5px"><span class="s">00046</span></div>
<div class="g" style="left:615px;top:215.5px"><span class="s">Test nouvel article</span></div>
<svg style="left:1102px;top:217px" width="16" height="16" viewBox="0 0 16 16"><rect x=".75" y=".75" width="14.5" height="14.5" fill="#fff" stroke="#555" stroke-width="1.5"/><path d="M1.9 7.9l4.2 4.1 7.7-7.5" stroke="#555" stroke-width="1.7" fill="none"/></svg>
<div class="g" style="left:474px;top:235.5px"><span class="s">06500</span></div>
<div class="g" style="left:615px;top:235.5px"><span class="s">Joue 28 profil talon 95 sans patte dodécagone 4viS</span></div>
<div class="g" style="left:936px;top:235.5px"><span class="s">10</span></div>
<div class="g" style="left:1140px;top:235.5px"><span class="s">SEPALUMIC</span></div>
<svg style="left:1102px;top:237px" width="16" height="16" viewBox="0 0 16 16"><rect x=".75" y=".75" width="14.5" height="14.5" fill="#fff" stroke="#555" stroke-width="1.5"/><path d="M1.9 7.9l4.2 4.1 7.7-7.5" stroke="#555" stroke-width="1.7" fill="none"/></svg>
<div class="g" style="left:474px;top:255.5px"><span class="s">065001</span></div>
<div class="g" style="left:615px;top:255.5px"><span class="s">Joue 28x profil talon 95 sans patte dodécagone 4vi</span></div>
<div class="g" style="left:936px;top:255.5px"><span class="s">10</span></div>
<div class="g" style="left:1140px;top:255.5px"><span class="s">FERCO</span></div>
<svg style="left:1102px;top:257px" width="16" height="16" viewBox="0 0 16 16"><rect x=".75" y=".75" width="14.5" height="14.5" fill="#fff" stroke="#555" stroke-width="1.5"/><path d="M1.9 7.9l4.2 4.1 7.7-7.5" stroke="#555" stroke-width="1.7" fill="none"/></svg>
<div class="g" style="left:474px;top:275.5px"><span class="s">065001B</span></div>
<div class="g" style="left:615px;top:275.5px"><span class="s">Joue 28 profil talon 95 sans patte dodécagone 4viS</span></div>
<div class="g" style="left:936px;top:275.5px"><span class="s">10</span></div>
<svg style="left:1102px;top:277px" width="16" height="16" viewBox="0 0 16 16"><rect x=".75" y=".75" width="14.5" height="14.5" fill="#fff" stroke="#555" stroke-width="1.5"/><path d="M1.9 7.9l4.2 4.1 7.7-7.5" stroke="#555" stroke-width="1.7" fill="none"/></svg>
<div class="g" style="left:474px;top:295.5px"><span class="s">065002</span></div>
<div class="g" style="left:615px;top:295.5px"><span class="s">Mod Designation Art 065002</span></div>
<div class="g" style="left:1140px;top:295.5px"><span class="s">FERCO</span></div>
<svg style="left:1102px;top:297px" width="16" height="16" viewBox="0 0 16 16"><rect x=".75" y=".75" width="14.5" height="14.5" fill="#fff" stroke="#555" stroke-width="1.5"/><path d="M1.9 7.9l4.2 4.1 7.7-7.5" stroke="#555" stroke-width="1.7" fill="none"/></svg>
<div class="g" style="left:474px;top:315.5px"><span class="s">065003</span></div>
<div class="g" style="left:615px;top:315.5px"><span class="s">Pas géré en stock</span></div>
<svg style="left:1102px;top:317px" width="16" height="16" viewBox="0 0 16 16"><rect x=".75" y=".75" width="14.5" height="14.5" fill="#fff" stroke="#555" stroke-width="1.5"/><path d="M1.9 7.9l4.2 4.1 7.7-7.5" stroke="#555" stroke-width="1.7" fill="none"/></svg>
<div class="g" style="left:474px;top:335.5px"><span class="s">065004</span></div>
<div class="g" style="left:615px;top:335.5px"><span class="s">Joue 28 profil talon 95 sans patte dodécagone 4viS</span></div>
<div class="g" style="left:936px;top:335.5px"><span class="s">10</span></div>
<svg style="left:1102px;top:337px" width="16" height="16" viewBox="0 0 16 16"><rect x=".75" y=".75" width="14.5" height="14.5" fill="#fff" stroke="#555" stroke-width="1.5"/><path d="M1.9 7.9l4.2 4.1 7.7-7.5" stroke="#555" stroke-width="1.7" fill="none"/></svg>
<div class="g" style="left:474px;top:355.5px"><span class="s">1010144</span></div>
<div class="g" style="left:615px;top:355.5px"><span class="s">Jonction simple de 14 mm</span></div>
<div class="g" style="left:936px;top:355.5px"><span class="s">23</span></div>
<div class="g" style="left:1140px;top:355.5px"><span class="s">PLASTIVAL</span></div>
<svg style="left:1102px;top:357px" width="16" height="16" viewBox="0 0 16 16"><rect x=".75" y=".75" width="14.5" height="14.5" fill="#fff" stroke="#555" stroke-width="1.5"/><path d="M1.9 7.9l4.2 4.1 7.7-7.5" stroke="#555" stroke-width="1.7" fill="none"/></svg>
<div class="g" style="left:474px;top:375.5px"><span class="s">1010144B</span></div>
<div class="g" style="left:615px;top:375.5px"><span class="s">Jonction simple de 14 mm</span></div>
<div class="g" style="left:936px;top:375.5px"><span class="s">23</span></div>
<svg style="left:1102px;top:377px" width="16" height="16" viewBox="0 0 16 16"><rect x=".75" y=".75" width="14.5" height="14.5" fill="#fff" stroke="#555" stroke-width="1.5"/><path d="M1.9 7.9l4.2 4.1 7.7-7.5" stroke="#555" stroke-width="1.7" fill="none"/></svg>
<div class="g" style="left:474px;top:395.5px"><span class="s">1010144_7016_7016</span></div>
<div class="g" style="left:615px;top:395.5px"><span class="s">Jonction simple de 14 mm</span></div>
<div class="g" style="left:936px;top:395.5px"><span class="s">23</span></div>
<div class="g" style="left:1140px;top:395.5px"><span class="s">SEPALUMIC</span></div>
<svg style="left:1102px;top:397px" width="16" height="16" viewBox="0 0 16 16"><rect x=".75" y=".75" width="14.5" height="14.5" fill="#fff" stroke="#555" stroke-width="1.5"/><path d="M1.9 7.9l4.2 4.1 7.7-7.5" stroke="#555" stroke-width="1.7" fill="none"/></svg>
<div class="g" style="left:474px;top:415.5px"><span class="s">1010144_9010_9010</span></div>
<div class="g" style="left:615px;top:415.5px"><span class="s">Jonction simple de 14 mm</span></div>
<div class="g" style="left:936px;top:415.5px"><span class="s">23</span></div>
<div class="g" style="left:1140px;top:415.5px"><span class="s">SEPALUMIC</span></div>
<svg style="left:1102px;top:417px" width="16" height="16" viewBox="0 0 16 16"><rect x=".75" y=".75" width="14.5" height="14.5" fill="#fff" stroke="#555" stroke-width="1.5"/><path d="M1.9 7.9l4.2 4.1 7.7-7.5" stroke="#555" stroke-width="1.7" fill="none"/></svg>
<div class="g" style="left:474px;top:435.5px"><span class="s">1010145</span></div>
<div class="g" style="left:615px;top:435.5px"><span class="s">Jonction renforcée de 14 mm</span></div>
<div class="g" style="left:936px;top:435.5px"><span class="s">23</span></div>
<svg style="left:1102px;top:437px" width="16" height="16" viewBox="0 0 16 16"><rect x=".75" y=".75" width="14.5" height="14.5" fill="#fff" stroke="#555" stroke-width="1.5"/><path d="M1.9 7.9l4.2 4.1 7.7-7.5" stroke="#555" stroke-width="1.7" fill="none"/></svg>
<div class="g" style="left:474px;top:455.5px"><span class="s">1010145B</span></div>
<div class="g" style="left:615px;top:455.5px"><span class="s">Jonction renforcée de 14 mm</span></div>
<div class="g" style="left:936px;top:455.5px"><span class="s">23</span></div>
<svg style="left:1102px;top:457px" width="16" height="16" viewBox="0 0 16 16"><rect x=".75" y=".75" width="14.5" height="14.5" fill="#fff" stroke="#555" stroke-width="1.5"/><path d="M1.9 7.9l4.2 4.1 7.7-7.5" stroke="#555" stroke-width="1.7" fill="none"/></svg>
<div class="g" style="left:474px;top:475.5px"><span class="s">1010145_7016_7016</span></div>
<div class="g" style="left:615px;top:475.5px"><span class="s">Jonction renforcée de 14 mm</span></div>
<div class="g" style="left:936px;top:475.5px"><span class="s">23</span></div>
<div class="g" style="left:1140px;top:475.5px"><span class="s">SEPALUMIC</span></div>
<svg style="left:1102px;top:477px" width="16" height="16" viewBox="0 0 16 16"><rect x=".75" y=".75" width="14.5" height="14.5" fill="#fff" stroke="#555" stroke-width="1.5"/><path d="M1.9 7.9l4.2 4.1 7.7-7.5" stroke="#555" stroke-width="1.7" fill="none"/></svg>
<div class="g" style="left:474px;top:495.5px"><span class="s">1010145_9010_9010</span></div>
<div class="g" style="left:615px;top:495.5px"><span class="s">Jonction renforcée de 14 mm</span></div>
<div class="g" style="left:936px;top:495.5px"><span class="s">23</span></div>
<svg style="left:1102px;top:497px" width="16" height="16" viewBox="0 0 16 16"><rect x=".75" y=".75" width="14.5" height="14.5" fill="#fff" stroke="#555" stroke-width="1.5"/><path d="M1.9 7.9l4.2 4.1 7.7-7.5" stroke="#555" stroke-width="1.7" fill="none"/></svg>
<div class="g" style="left:474px;top:515.5px"><span class="s">1010240</span></div>
<div class="g" style="left:615px;top:515.5px"><span class="s">Traverse W1010186 joint noir x 2</span></div>
<div class="g" style="left:936px;top:515.5px"><span class="s">23</span></div>
<svg style="left:1102px;top:517px" width="16" height="16" viewBox="0 0 16 16"><rect x=".75" y=".75" width="14.5" height="14.5" fill="#fff" stroke="#555" stroke-width="1.5"/><path d="M1.9 7.9l4.2 4.1 7.7-7.5" stroke="#555" stroke-width="1.7" fill="none"/></svg>
<div class="g" style="left:474px;top:535.5px"><span class="s">1010240_7016_7016</span></div>
<div class="g" style="left:615px;top:535.5px"><span class="s">Traverse W1010186 joint noir x 2</span></div>
<div class="g" style="left:936px;top:535.5px"><span class="s">23</span></div>
<svg style="left:1102px;top:537px" width="16" height="16" viewBox="0 0 16 16"><rect x=".75" y=".75" width="14.5" height="14.5" fill="#fff" stroke="#555" stroke-width="1.5"/><path d="M1.9 7.9l4.2 4.1 7.7-7.5" stroke="#555" stroke-width="1.7" fill="none"/></svg>
<div class="g" style="left:474px;top:555.5px"><span class="s">1010240_9010_9010</span></div>
<div class="g" style="left:615px;top:555.5px"><span class="s">Traverse W1010186 joint noir x 2</span></div>
<div class="g" style="left:936px;top:555.5px"><span class="s">23</span></div>
<svg style="left:1102px;top:557px" width="16" height="16" viewBox="0 0 16 16"><rect x=".75" y=".75" width="14.5" height="14.5" fill="#fff" stroke="#555" stroke-width="1.5"/><path d="M1.9 7.9l4.2 4.1 7.7-7.5" stroke="#555" stroke-width="1.7" fill="none"/></svg>
<div class="g" style="left:474px;top:575.5px"><span class="s">1010384</span></div>
<div class="g" style="left:615px;top:575.5px"><span class="s">Seuil PMR filant</span></div>
<div class="g" style="left:936px;top:575.5px"><span class="s">23</span></div>
<div class="g" style="left:1140px;top:575.5px"><span class="s">FERCO</span></div>
<svg style="left:1102px;top:577px" width="16" height="16" viewBox="0 0 16 16"><rect x=".75" y=".75" width="14.5" height="14.5" fill="#fff" stroke="#555" stroke-width="1.5"/><path d="M1.9 7.9l4.2 4.1 7.7-7.5" stroke="#555" stroke-width="1.7" fill="none"/></svg>
<div class="g" style="left:474px;top:595.5px"><span class="s">1010384_7016_7016</span></div>
<div class="g" style="left:615px;top:595.5px"><span class="s">Seuil PMR filant</span></div>
<div class="g" style="left:936px;top:595.5px"><span class="s">23</span></div>
<svg style="left:1102px;top:597px" width="16" height="16" viewBox="0 0 16 16"><rect x=".75" y=".75" width="14.5" height="14.5" fill="#fff" stroke="#555" stroke-width="1.5"/><path d="M1.9 7.9l4.2 4.1 7.7-7.5" stroke="#555" stroke-width="1.7" fill="none"/></svg>
<div class="g" style="left:474px;top:615.5px"><span class="s">1010384_9010_9010</span></div>
<div class="g" style="left:615px;top:615.5px"><span class="s">Seuil PMR filant</span></div>
<div class="g" style="left:936px;top:615.5px"><span class="s">23</span></div>
<svg style="left:1102px;top:617px" width="16" height="16" viewBox="0 0 16 16"><rect x=".75" y=".75" width="14.5" height="14.5" fill="#fff" stroke="#555" stroke-width="1.5"/><path d="M1.9 7.9l4.2 4.1 7.7-7.5" stroke="#555" stroke-width="1.7" fill="none"/></svg>
<div class="g" style="left:474px;top:635.5px"><span class="s">1010407</span></div>
<div class="g" style="left:615px;top:635.5px"><span class="s">Traverse OV HI de 80</span></div>
<div class="g" style="left:936px;top:635.5px"><span class="s">23</span></div>
<svg style="left:1102px;top:637px" width="16" height="16" viewBox="0 0 16 16"><rect x=".75" y=".75" width="14.5" height="14.5" fill="#fff" stroke="#555" stroke-width="1.5"/><path d="M1.9 7.9l4.2 4.1 7.7-7.5" stroke="#555" stroke-width="1.7" fill="none"/></svg>
<div class="g" style="left:474px;top:655.5px"><span class="s">1010407_1000_1000</span></div>
<div class="g" style="left:615px;top:655.5px"><span class="s">Traverse OV HI de 80 RAL : 1000 / 1000</span></div>
<div class="g" style="left:936px;top:655.5px"><span class="s">23</span></div>
<svg style="left:1102px;top:657px" width="16" height="16" viewBox="0 0 16 16"><rect x=".75" y=".75" width="14.5" height="14.5" fill="#fff" stroke="#555" stroke-width="1.5"/><path d="M1.9 7.9l4.2 4.1 7.7-7.5" stroke="#555" stroke-width="1.7" fill="none"/></svg>
<div class="g" style="left:474px;top:675.5px"><span class="s">1010407_1000_1005</span></div>
<div class="g" style="left:615px;top:675.5px"><span class="s">Traverse OV HI de 80 RAL : 1000 / 1005</span></div>
<div class="g" style="left:936px;top:675.5px"><span class="s">23</span></div>
<svg style="left:1102px;top:677px" width="16" height="16" viewBox="0 0 16 16"><rect x=".75" y=".75" width="14.5" height="14.5" fill="#fff" stroke="#555" stroke-width="1.5"/><path d="M1.9 7.9l4.2 4.1 7.7-7.5" stroke="#555" stroke-width="1.7" fill="none"/></svg>
<div class="g" style="left:474px;top:695.5px"><span class="s">1010407_1001_1001</span></div>
<div class="g" style="left:615px;top:695.5px"><span class="s">Traverse OV HI de 80 RAL : 1001 / 1001</span></div>
<div class="g" style="left:936px;top:695.5px"><span class="s">23</span></div>
<svg style="left:1102px;top:697px" width="16" height="16" viewBox="0 0 16 16"><rect x=".75" y=".75" width="14.5" height="14.5" fill="#fff" stroke="#555" stroke-width="1.5"/><path d="M1.9 7.9l4.2 4.1 7.7-7.5" stroke="#555" stroke-width="1.7" fill="none"/></svg>
<div class="g" style="left:474px;top:715.5px"><span class="s">1010407_1003_1003</span></div>
<div class="g" style="left:615px;top:715.5px"><span class="s">Traverse OV HI de 80 RAL : 1003 / 1003</span></div>
<div class="g" style="left:936px;top:715.5px"><span class="s">23</span></div>
<svg style="left:1102px;top:717px" width="16" height="16" viewBox="0 0 16 16"><rect x=".75" y=".75" width="14.5" height="14.5" fill="#fff" stroke="#555" stroke-width="1.5"/><path d="M1.9 7.9l4.2 4.1 7.7-7.5" stroke="#555" stroke-width="1.7" fill="none"/></svg>
<div class="g" style="left:474px;top:735.5px"><span class="s">1010407_1004_1004</span></div>
<div class="g" style="left:615px;top:735.5px"><span class="s">Traverse OV HI de 80 RAL : 1004 / 1004</span></div>
<div class="g" style="left:936px;top:735.5px"><span class="s">23</span></div>
<svg style="left:1102px;top:737px" width="16" height="16" viewBox="0 0 16 16"><rect x=".75" y=".75" width="14.5" height="14.5" fill="#fff" stroke="#555" stroke-width="1.5"/><path d="M1.9 7.9l4.2 4.1 7.7-7.5" stroke="#555" stroke-width="1.7" fill="none"/></svg>
<div class="g" style="left:474px;top:755.5px"><span class="s">1010407_1005_1005</span></div>
<div class="g" style="left:615px;top:755.5px"><span class="s">Traverse OV HI de 80 RAL : 1005 / 1005</span></div>
<div class="g" style="left:936px;top:755.5px"><span class="s">23</span></div>
<svg style="left:1102px;top:757px" width="16" height="16" viewBox="0 0 16 16"><rect x=".75" y=".75" width="14.5" height="14.5" fill="#fff" stroke="#555" stroke-width="1.5"/><path d="M1.9 7.9l4.2 4.1 7.7-7.5" stroke="#555" stroke-width="1.7" fill="none"/></svg>
<div class="a" style="left:471px;top:196px;width:142px;height:21px;border:1px solid #000;border-right-width:3px;border-bottom-width:3px"></div>
</body></html>
